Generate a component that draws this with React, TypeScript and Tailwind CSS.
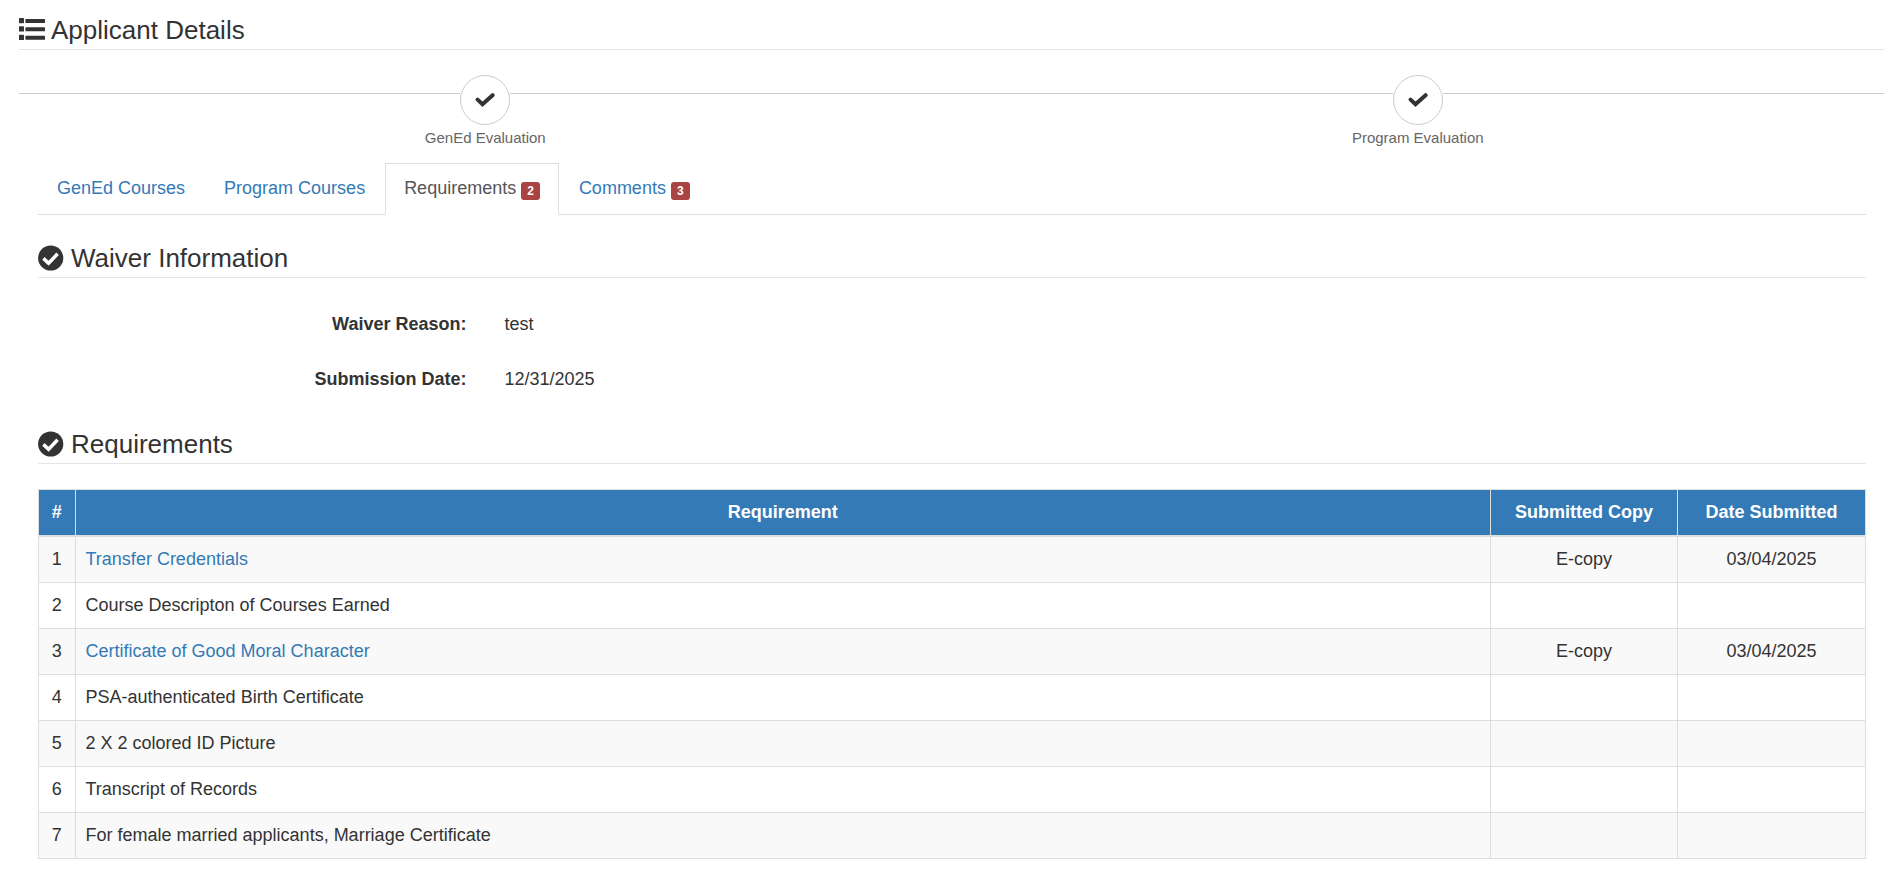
import type { ReactNode } from "react";

type Requirement = {
  name: string;
  copy?: string;
  date?: string;
  hasFile?: boolean;
};

const requirements: Requirement[] = [
  { name: "Transfer Credentials", copy: "E-copy", date: "03/04/2025", hasFile: true },
  { name: "Course Descripton of Courses Earned" },
  { name: "Certificate of Good Moral Character", copy: "E-copy", date: "03/04/2025", hasFile: true },
  { name: "PSA-authenticated Birth Certificate" },
  { name: "2 X 2 colored ID Picture" },
  { name: "Transcript of Records" },
  { name: "For female married applicants, Marriage Certificate" },
];

const tabs = [
  { label: "GenEd Courses" },
  { label: "Program Courses" },
  { label: "Requirements", count: 2, active: true },
  { label: "Comments", count: 3 },
];

const steps = ["GenEd Evaluation", "Program Evaluation"];

function ListIcon() {
  return (
    <svg className="h-6 w-[26px] shrink-0" viewBox="0 0 26 24" fill="currentColor" aria-hidden="true">
      {[0, 8.3, 16.8].map((y) => (
        <g key={y}>
          <rect x="0" y={y} width="5" height="5.2" rx="0.6" />
          <rect x="6.4" y={y + 1} width="19.6" height="4" rx="0.6" />
        </g>
      ))}
    </svg>
  );
}

function OkIcon() {
  return (
    <svg className="h-[14px] w-5" viewBox="0 0 20 14" fill="none" stroke="currentColor" aria-hidden="true">
      <path d="M2.6 6.6 L7.5 11.2 L17.6 2.2" strokeWidth="4" strokeLinecap="round" />
    </svg>
  );
}

function OkSignIcon() {
  return (
    <svg className="h-[26px] w-[27px] shrink-0" viewBox="0 0 27 26" aria-hidden="true">
      <circle cx="12.7" cy="13" r="12.6" fill="currentColor" />
      <path d="M5.4 13.4 L10.6 18.2 L19.6 8.8" fill="none" stroke="#fff" strokeWidth="3.5" />
    </svg>
  );
}

function Legend({ icon, children }: { icon: ReactNode; children: ReactNode }) {
  return (
    <h2 className="flex items-center gap-[6px] border-b border-[#e5e5e5] text-[26px] leading-[38px]">
      {icon}
      {children}
    </h2>
  );
}

function Detail({ label, children }: { label: string; children: ReactNode }) {
  return (
    <div className="grid grid-cols-4">
      <dt className="pr-[19px] text-right font-bold">{label}</dt>
      <dd className="col-span-3 pl-[19px]">{children}</dd>
    </div>
  );
}

export default function App() {
  return (
    <div className="min-h-screen bg-white pt-[11px] pr-[18px] pb-6 pl-[19px] font-['Liberation_Sans',Arial,sans-serif] text-[18px] leading-[25px] text-[#333]">
      <Legend icon={<ListIcon />}>Applicant Details</Legend>

      <ol className="mt-[25px] grid grid-cols-2">
        {steps.map((step) => (
          <li key={step} className="flex flex-col items-center">
            <div className="flex w-full items-start">
              <span className="mt-[18px] h-px flex-1 bg-[#ccc]" />
              <span className="flex size-[50px] items-center justify-center rounded-full border border-[#ccc] bg-white">
                <OkIcon />
              </span>
              <span className="mt-[18px] h-px flex-1 bg-[#ccc]" />
            </div>
            <span className="mt-[2px] text-[15px] leading-[21px] text-[#666]">{step}</span>
          </li>
        ))}
      </ol>

      <main className="pr-[18px] pl-[19px]">
        <div role="tablist" className="mt-[15px] flex gap-px border-b border-[#ddd]">
          {tabs.map((tab) => (
            <button
              key={tab.label}
              type="button"
              role="tab"
              aria-selected={!!tab.active}
              className={
                tab.active
                  ? "-mb-px flex items-center gap-[5px] border border-[#ddd] border-b-white bg-white px-[18px] pt-3 pb-[13px] text-[#555]"
                  : "-mb-px flex items-center gap-[5px] border border-transparent px-[18px] pt-3 pb-[13px] text-[#337ab7]"
              }
            >
              {tab.label}
              {tab.count && (
                <span className="mt-1 rounded-[3px] bg-[#a94442] px-[6px] text-[12px] leading-[18px] font-bold text-white">
                  {tab.count}
                </span>
              )}
            </button>
          ))}
        </div>

        <section className="mt-6">
          <Legend icon={<OkSignIcon />}>Waiver Information</Legend>
          <dl className="-mx-[19px] mt-[34px] flex flex-col gap-[30px]">
            <Detail label="Waiver Reason:">test</Detail>
            <Detail label="Submission Date:">12/31/2025</Detail>
          </dl>
        </section>

        <section className="mt-[33px]">
          <Legend icon={<OkSignIcon />}>Requirements</Legend>
          <table className="mt-[25px] w-full table-fixed border-collapse border border-[#ddd]">
            <colgroup>
              <col className="w-[2%]" />
              <col />
              <col className="w-[187px]" />
              <col className="w-[188px]" />
            </colgroup>
            <thead>
              <tr className="bg-[#337ab7] text-white">
                {["#", "Requirement", "Submitted Copy", "Date Submitted"].map((title) => (
                  <th key={title} scope="col" className="border border-b-2 border-[#ddd] py-[10px] text-center font-bold">
                    {title}
                  </th>
                ))}
              </tr>
            </thead>
            <tbody>
              {requirements.map((item, i) => (
                <tr key={item.name} className="h-[46px] odd:bg-[#f9f9f9]">
                  <td className="border border-[#ddd] text-center">{i + 1}</td>
                  <td className="border border-[#ddd] px-[10px]">
                    {item.hasFile ? (
                      <a href="#" className="text-[#337ab7] hover:underline">
                        {item.name}
                      </a>
                    ) : (
                      item.name
                    )}
                  </td>
                  <td className="border border-[#ddd] text-center">{item.copy}</td>
                  <td className="border border-[#ddd] text-center">{item.date}</td>
                </tr>
              ))}
            </tbody>
          </table>
        </section>
      </main>
    </div>
  );
}
